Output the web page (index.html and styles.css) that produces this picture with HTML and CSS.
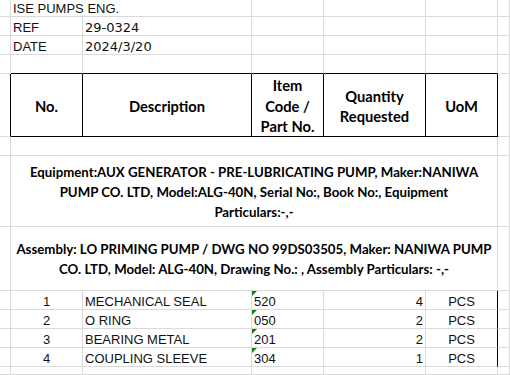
FILE: index.html
```html
<!DOCTYPE html>
<html>
<head>
<meta charset="utf-8">
<link rel="stylesheet" href="styles.css">
</head>
<body>
<div class="sheet">
  <!-- row 1 -->
  <div class="c"></div>
  <div class="c s2 txt">ISE PUMPS ENG.</div>
  <div class="c"></div><div class="c"></div><div class="c"></div><div class="c"></div>
  <!-- row 2 -->
  <div class="c"></div>
  <div class="c txt">REF</div>
  <div class="c txt num">29-0324</div>
  <div class="c"></div><div class="c"></div><div class="c"></div><div class="c"></div>
  <!-- row 3 -->
  <div class="c"></div>
  <div class="c txt">DATE</div>
  <div class="c txt num">2024/3/20</div>
  <div class="c"></div><div class="c"></div><div class="c"></div><div class="c"></div>
  <!-- row 4 -->
  <div class="c"></div>
  <div class="c bb"></div><div class="c bb"></div><div class="c bb"></div><div class="c bb"></div><div class="c bb"></div>
  <div class="c"></div>
  <!-- header -->
  <div class="c brk"></div>
  <div class="c hd">No.</div>
  <div class="c hd">Description</div>
  <div class="c hd">Item<br>Code /<br>Part No.</div>
  <div class="c hd">Quantity<br>Requested</div>
  <div class="c hd">UoM</div>
  <div class="c"></div>
  <!-- empty merged -->
  <div class="c"></div>
  <div class="c s5"></div>
  <div class="c"></div>
  <!-- equipment -->
  <div class="c"></div>
  <div class="c s5 para">Equipment:AUX GENERATOR - PRE-LUBRICATING PUMP, Maker:NANIWA<br>PUMP CO. LTD, Model:ALG-40N, Serial No:, Book No:, Equipment<br>Particulars:-,-</div>
  <div class="c"></div>
  <!-- assembly -->
  <div class="c"></div>
  <div class="c s5 para">Assembly: LO PRIMING PUMP / DWG NO 99DS03505, Maker: NANIWA PUMP<br>CO. LTD, Model: ALG-40N, Drawing No.: , Assembly Particulars: -,-</div>
  <div class="c"></div>
  <!-- items -->
  <div class="c"></div>
  <div class="c txt ctr">1</div>
  <div class="c txt">MECHANICAL SEAL</div>
  <div class="c txt code">520</div>
  <div class="c txt rt">4</div>
  <div class="c txt ctr brk">PCS</div>
  <div class="c"></div>

  <div class="c"></div>
  <div class="c txt ctr">2</div>
  <div class="c txt">O RING</div>
  <div class="c txt code">050</div>
  <div class="c txt rt">2</div>
  <div class="c txt ctr brk">PCS</div>
  <div class="c"></div>

  <div class="c"></div>
  <div class="c txt ctr">3</div>
  <div class="c txt">BEARING METAL</div>
  <div class="c txt code">201</div>
  <div class="c txt rt">2</div>
  <div class="c txt ctr brk">PCS</div>
  <div class="c"></div>

  <div class="c"></div>
  <div class="c txt ctr">4</div>
  <div class="c txt">COUPLING SLEEVE</div>
  <div class="c txt code">304</div>
  <div class="c txt rt">1</div>
  <div class="c txt ctr brk">PCS</div>
  <div class="c"></div>
  <!-- trailing row -->
  <div class="c"></div><div class="c"></div><div class="c"></div><div class="c"></div><div class="c"></div><div class="c"></div><div class="c"></div>
</div>
</body>
</html>
```
FILE: styles.css
```css
html, body {
  margin: 0;
  padding: 0;
  background: #ffffff;
}
body {
  width: 510px;
  height: 375px;
  overflow: hidden;
}
.sheet {
  display: grid;
  grid-template-columns: 11px 72px 169px 72px 102px 72px 12px;
  grid-template-rows: 17px 19px 19px 19px 63px 19px 71px 64px 19px 19px 19px 19px 8px;
  font-family: "Liberation Sans", Arial, sans-serif;
  font-size: 13px;
  color: #111;
}
.c {
  box-sizing: border-box;
  border-right: 1px solid #dadada;
  border-bottom: 1px solid #dadada;
  position: relative;
  min-width: 0;
}
.s2 { grid-column: span 2; }
.s5 { grid-column: span 5; }
.txt {
  display: flex;
  align-items: flex-end;
  padding: 0 2px;
  line-height: 15px;
  white-space: nowrap;
}
.num {
  font-family: "DejaVu Sans", sans-serif;
}
.ctr { justify-content: center; }
.rt { justify-content: flex-end; }
.bb { border-bottom-color: #000; }
.brk { border-right-color: #000; }
.hd {
  border-right-color: #000;
  border-bottom-color: #000;
  display: flex;
  align-items: center;
  justify-content: center;
  text-align: center;
  font-family: Lato, "Open Sans", sans-serif;
  font-weight: 700;
  font-size: 14.7px;
  line-height: 20.5px;
  padding-top: 2px;
  color: #000;
}
.para {
  display: flex;
  align-items: center;
  justify-content: center;
  text-align: center;
  font-family: Lato, "Open Sans", sans-serif;
  font-weight: 700;
  font-size: 13.25px;
  line-height: 20px;
  color: #000;
  white-space: nowrap;
  padding-top: 1px;
}
.code::before {
  content: "";
  position: absolute;
  left: 0;
  top: 0;
  width: 0;
  height: 0;
  border-top: 5px solid #1a7a1a;
  border-right: 5px solid transparent;
}
```
